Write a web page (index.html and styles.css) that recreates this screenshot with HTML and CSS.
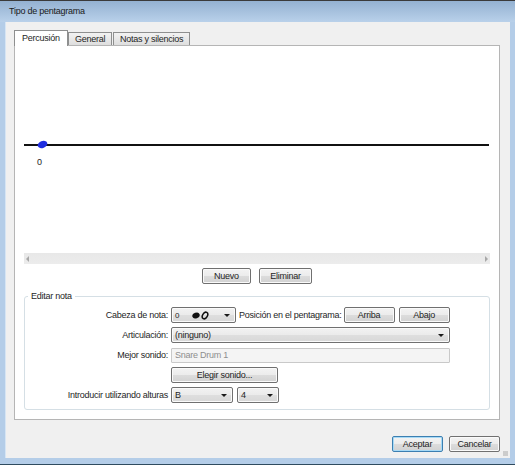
FILE: index.html
```html
<!DOCTYPE html>
<html>
<head>
<meta charset="utf-8">
<link rel="stylesheet" href="styles.css">
</head>
<body>
<div class="window">
  <div class="titlebar">Tipo de pentagrama</div>
  <div class="client">
    <div class="tabs">
      <div class="tab active">Percusión</div>
      <div class="tab">General</div>
      <div class="tab">Notas y silencios</div>
    </div>
    <div class="panel">
      <div class="staff">
        <div class="staffline">
          <svg class="note" width="11" height="9" viewBox="0 0 11 9"><ellipse cx="5.5" cy="4.5" rx="5" ry="3.4" transform="rotate(-22 5.5 4.5)" fill="#1f2ee0"/></svg>
        </div>
        <div class="notelabel">0</div>
      </div>
      <div class="hscroll">
        <svg width="4" height="6" viewBox="0 0 4 6"><path d="M3 0 L0 3 L3 6 Z" fill="#a8a8a8"/></svg>
        <svg width="4" height="6" viewBox="0 0 4 6"><path d="M1 0 L4 3 L1 6 Z" fill="#a8a8a8"/></svg>
      </div>
      <div class="btnrow">
        <div class="btn w-nuevo">Nuevo</div>
        <div class="btn w-elim">Eliminar</div>
      </div>
      <div class="group">
        <div class="legend">Editar nota</div>
        <div class="grid">
          <div class="lbl">Cabeza de nota:</div>
          <div class="fields">
            <div class="combo w-head">
              <span class="headtxt">0</span>
              <svg class="heads" width="18" height="9" viewBox="0 0 18 9">
                <ellipse cx="4" cy="4.5" rx="3.8" ry="2.8" transform="rotate(-20 4 4.5)" fill="#111"/>
                <ellipse cx="13" cy="4.5" rx="2.4" ry="3.5" transform="rotate(30 13 4.5)" fill="none" stroke="#111" stroke-width="1.5"/>
              </svg>
              <span class="arrow"></span>
            </div>
            <span class="txt">Posición en el pentagrama:</span>
            <div class="btn w-arr">Arriba</div>
            <div class="btn w-arr">Abajo</div>
          </div>
          <div class="lbl">Articulación:</div>
          <div class="fields">
            <div class="combo w-full"><span class="ctext">(ninguno)</span><span class="arrow"></span></div>
          </div>
          <div class="lbl">Mejor sonido:</div>
          <div class="fields">
            <div class="field disabled w-full">Snare Drum 1</div>
          </div>
          <div class="lbl"></div>
          <div class="fields">
            <div class="btn w-elegir">Elegir sonido...</div>
          </div>
          <div class="lbl">Introducir utilizando alturas</div>
          <div class="fields">
            <div class="combo w-b"><span class="ctext">B</span><span class="arrow"></span></div>
            <div class="combo w-4"><span class="ctext">4</span><span class="arrow"></span></div>
          </div>
        </div>
      </div>
    </div>
    <div class="footer">
      <div class="btn default w-arr">Aceptar</div>
      <div class="btn w-arr">Cancelar</div>
      <span class="grip"></span>
    </div>
  </div>
</div>
</body>
</html>
```

FILE: styles.css
```css
* { box-sizing: border-box; }
html, body { margin: 0; padding: 0; }
body {
  width: 515px;
  height: 465px;
  overflow: hidden;
  background: #ffffff;
  font-family: "Liberation Sans", Arial, sans-serif;
  font-size: 9px;
  letter-spacing: -0.25px;
  color: #1e1e1e;
}
.window {
  width: 515px;
  height: 465px;
  background: #b4cde8;
  border-top: 1px solid #3a3a3a;
  border-bottom: 1px solid #2f4b5f;
  display: flex;
  flex-direction: column;
}
.titlebar {
  height: 21px;
  padding-left: 9px;
  line-height: 20px;
  background: linear-gradient(#94b1d1, #b9d1ea);
  color: #1a1a1a;
  flex: none;
}
.client {
  margin: 0 5px 6px 6px;
  height: 436px;
  background: #f0f0f0;
  padding: 8px 10px 0 8px;
  position: relative;
  box-shadow: -1px 0 0 #d6e5f4;
}
.tabs {
  display: flex;
  align-items: flex-end;
  height: 15px;
  position: relative;
  z-index: 1;
}
.tab {
  height: 13px;
  line-height: 12px;
  border: 1px solid #8e8f8f;
  border-bottom: none;
  background: linear-gradient(#f2f2f2, #dedede);
  padding: 0 6px;
  color: #1e1e1e;
  white-space: nowrap;
  overflow: hidden;
  flex: none;
}
.tab + .tab { margin-left: 1px; }
.tab.active {
  height: 16px;
  margin-bottom: -1px;
  background: #ffffff;
  width: 54px;
  padding-left: 7px;
  line-height: 15px;
}
.tab:nth-child(2) { width: 44px; padding-left: 6px; margin-left: 0; }
.tab:nth-child(3) { width: 77px; padding-left: 6px; padding-right: 0; }
.panel {
  width: 486px;
  height: 375px;
  background: #ffffff;
  border: 1px solid #b5b5b5;
  padding: 0 9px;
}
.staff {
  height: 207px;
  padding-top: 98px;
  position: relative;
}
.staffline {
  height: 2px;
  background: #111111;
  margin-right: 1px;
  position: relative;
}
.note {
  position: absolute;
  left: 13px;
  top: -4px;
}
.notelabel {
  margin-left: 13px;
  margin-top: 11px;
  font-size: 9px;
}
.hscroll {
  height: 11px;
  background: linear-gradient(#e8e8e8, #ececec);
  display: flex;
  align-items: center;
  justify-content: space-between;
  padding: 0 2px 0 2px;
}
.btnrow {
  display: flex;
  justify-content: center;
  gap: 8px;
  margin-top: 4px;
  height: 16px;
}
.btn {
  height: 16px;
  line-height: 14px;
  text-align: center;
  border: 1px solid #707070;
  border-radius: 2px;
  background: linear-gradient(#f3f3f3 0%, #ececec 48%, #dcdcdc 52%, #d2d2d2 100%);
  box-shadow: inset 0 0 0 1px #fafafa;
  color: #1e1e1e;
  flex: none;
}
.btn.default {
  border-color: #3c7fb1;
  box-shadow: inset 0 0 0 1px #a7daf6;
}
.w-nuevo { width: 49px; }
.w-elim { width: 53px; }
.w-arr { width: 51px; }
.w-elegir { width: 107px; }
.group {
  margin-top: 12px;
  height: 114px;
  border: 1px solid #d5dfe5;
  border-radius: 3px;
  position: relative;
  padding-top: 10px;
}
.legend {
  position: absolute;
  top: -6px;
  left: 3px;
  padding: 0 3px;
  background: #ffffff;
  line-height: 11px;
}
.grid {
  display: grid;
  grid-template-columns: 143px 1fr;
  column-gap: 3px;
  row-gap: 4px;
  grid-auto-rows: 16px;
}
.lbl {
  text-align: right;
  line-height: 16px;
  white-space: nowrap;
}
.fields {
  display: flex;
  align-items: center;
  gap: 4px;
  height: 16px;
}
.txt { margin: 0 -2px 0 -1px; white-space: nowrap; }
.combo {
  height: 16px;
  border: 1px solid #707070;
  border-radius: 2px;
  background: linear-gradient(#f2f2f2 0%, #ebebeb 48%, #dedede 52%, #d8d8d8 100%);
  box-shadow: inset 0 0 0 1px #fafafa;
  display: flex;
  align-items: center;
  position: relative;
  flex: none;
}
.ctext { padding-left: 3px; line-height: 14px; }
.headtxt { padding-left: 3px; font-size: 8px; }
.heads { margin-left: 13px; }
.arrow {
  position: absolute;
  right: 5px;
  top: 6px;
  width: 0;
  height: 0;
  border-left: 3px solid transparent;
  border-right: 3px solid transparent;
  border-top: 3px solid #1a1a1a;
}
.w-head { width: 65px; }
.w-full { width: 279px; }
.w-b { width: 62px; }
.w-4 { width: 42px; }
.field {
  height: 15px;
  line-height: 13px;
  border: 1px solid #c9c9c9;
  border-radius: 1px;
  background: #f4f4f4;
  padding-left: 3px;
}
.field.disabled { color: #8e8e8e; }
.footer {
  display: flex;
  justify-content: flex-end;
  gap: 6px;
  margin-top: 16px;
  height: 16px;
}
.grip {
  position: absolute;
  right: 2px;
  bottom: 2px;
  width: 5px;
  height: 5px;
  background:
    radial-gradient(circle, #b8b8b8 0.6px, transparent 0.9px) 0 0 / 2px 2px;
}
```
